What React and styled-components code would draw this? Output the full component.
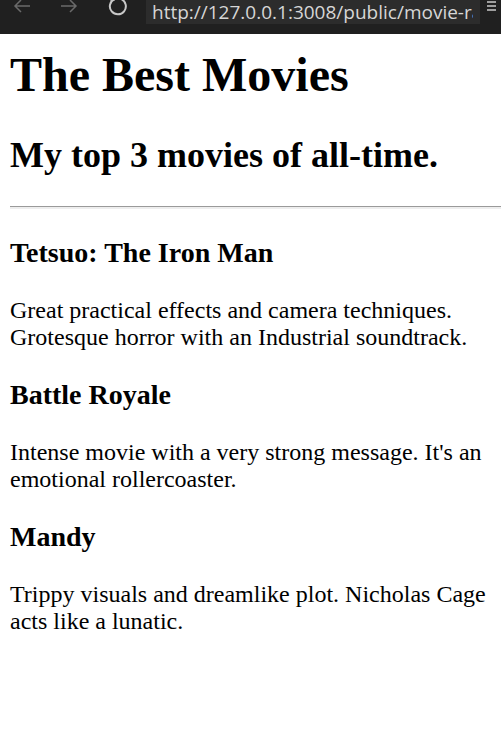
import React from "react";
import styled, { createGlobalStyle } from "styled-components";

const Global = createGlobalStyle`
  html, body { margin: 0; padding: 0; background: #ffffff; }
  body { overflow: hidden; font-family: "Liberation Serif", "Times New Roman", serif; color: #000; }
`;

const Bar = styled.header`
  display: flex;
  align-items: flex-start;
  height: 34px;
  background: #202020;
  overflow: hidden;
`;

const NavButton = styled.div`
  display: flex;
  align-items: center;
  justify-content: center;
  width: ${(p) => p.$w}px;
  height: 12px;
  flex: none;
  color: ${(p) => (p.$dim ? "#6a6a6a" : "#c8c8c8")};
`;

const UrlBox = styled.div`
  flex: none;
  width: 334px;
  height: 24px;
  margin-left: 4px;
  background: #2c2c2c;
  display: flex;
  align-items: flex-end;
  padding: 0 7px 0 6px;
  box-sizing: border-box;
`;

const UrlText = styled.span`
  flex: 1;
  min-width: 0;
  overflow: hidden;
  font-family: "Open Sans", "Noto Sans", sans-serif;
  font-size: 19px;
  line-height: 26px;
  color: #d6d6d6;
  white-space: nowrap;
  margin-bottom: -1px;
`;

const Page = styled.main`
  padding-left: 10px;
`;

const Title = styled.h1`
  font-size: 48px;
  font-weight: bold;
  margin: 13px 0 32px;
`;

const Subtitle = styled.h2`
  font-size: 36px;
  font-weight: bold;
  margin: 0 0 30px;
`;

const Rule = styled.hr`
  margin: 0;
  border: none;
  border-top: 1px solid #9a9a9a;
  border-bottom: 2px solid #eeeeee;
  height: 0;
`;

const MovieTitle = styled.h3`
  font-size: 28px;
  font-weight: bold;
  margin: 28px 0;
`;

const Review = styled.p`
  font-size: 24px;
  margin: 0;
  max-width: 490px;
`;

const movies = [
  {
    title: "Tetsuo: The Iron Man",
    review: "Great practical effects and camera techniques. Grotesque horror with an Industrial soundtrack.",
  },
  {
    title: "Battle Royale",
    review: "Intense movie with a very strong message. It's an emotional rollercoaster.",
  },
  {
    title: "Mandy",
    review: "Trippy visuals and dreamlike plot. Nicholas Cage acts like a lunatic.",
  },
];

const Arrow = ({ dir }) => (
  <svg width="18" height="14" viewBox="0 0 18 14" fill="none" stroke="currentColor" strokeWidth="1.5">
    {dir === "left" ? (
      <path d="M17 7H2M8 1L2 7l6 6" />
    ) : (
      <path d="M1 7h15M10 1l6 6-6 6" />
    )}
  </svg>
);

const Reload = () => (
  <svg width="22" height="22" viewBox="0 0 22 22" fill="none" stroke="currentColor" strokeWidth="2">
    <path d="M14.5 4.2A8 8 0 1 1 7 4.3" />
    <path d="M7 0.5v4h-4" />
  </svg>
);

const Menu = () => (
  <svg width="10" height="14" viewBox="0 0 10 14" stroke="currentColor" strokeWidth="1.5">
    <path d="M1 3h9M1 7h9M1 11h9" />
  </svg>
);

export default function App() {
  return (
    <>
      <Global />
      <Bar>
        <NavButton $w={44} $dim>
          <Arrow dir="left" />
        </NavButton>
        <NavButton $w={50} $dim>
          <Arrow dir="right" />
        </NavButton>
        <NavButton $w={48}>
          <Reload />
        </NavButton>
        <UrlBox>
          <UrlText>http://127.0.0.1:3008/public/movie-ranking.html</UrlText>
        </UrlBox>
        <NavButton $w={21}>
          <Menu />
        </NavButton>
      </Bar>
      <Page>
        <Title>The Best Movies</Title>
        <Subtitle>My top 3 movies of all-time.</Subtitle>
        <Rule />
        {movies.map((m) => (
          <section key={m.title}>
            <MovieTitle>{m.title}</MovieTitle>
            <Review>{m.review}</Review>
          </section>
        ))}
      </Page>
    </>
  );
}
